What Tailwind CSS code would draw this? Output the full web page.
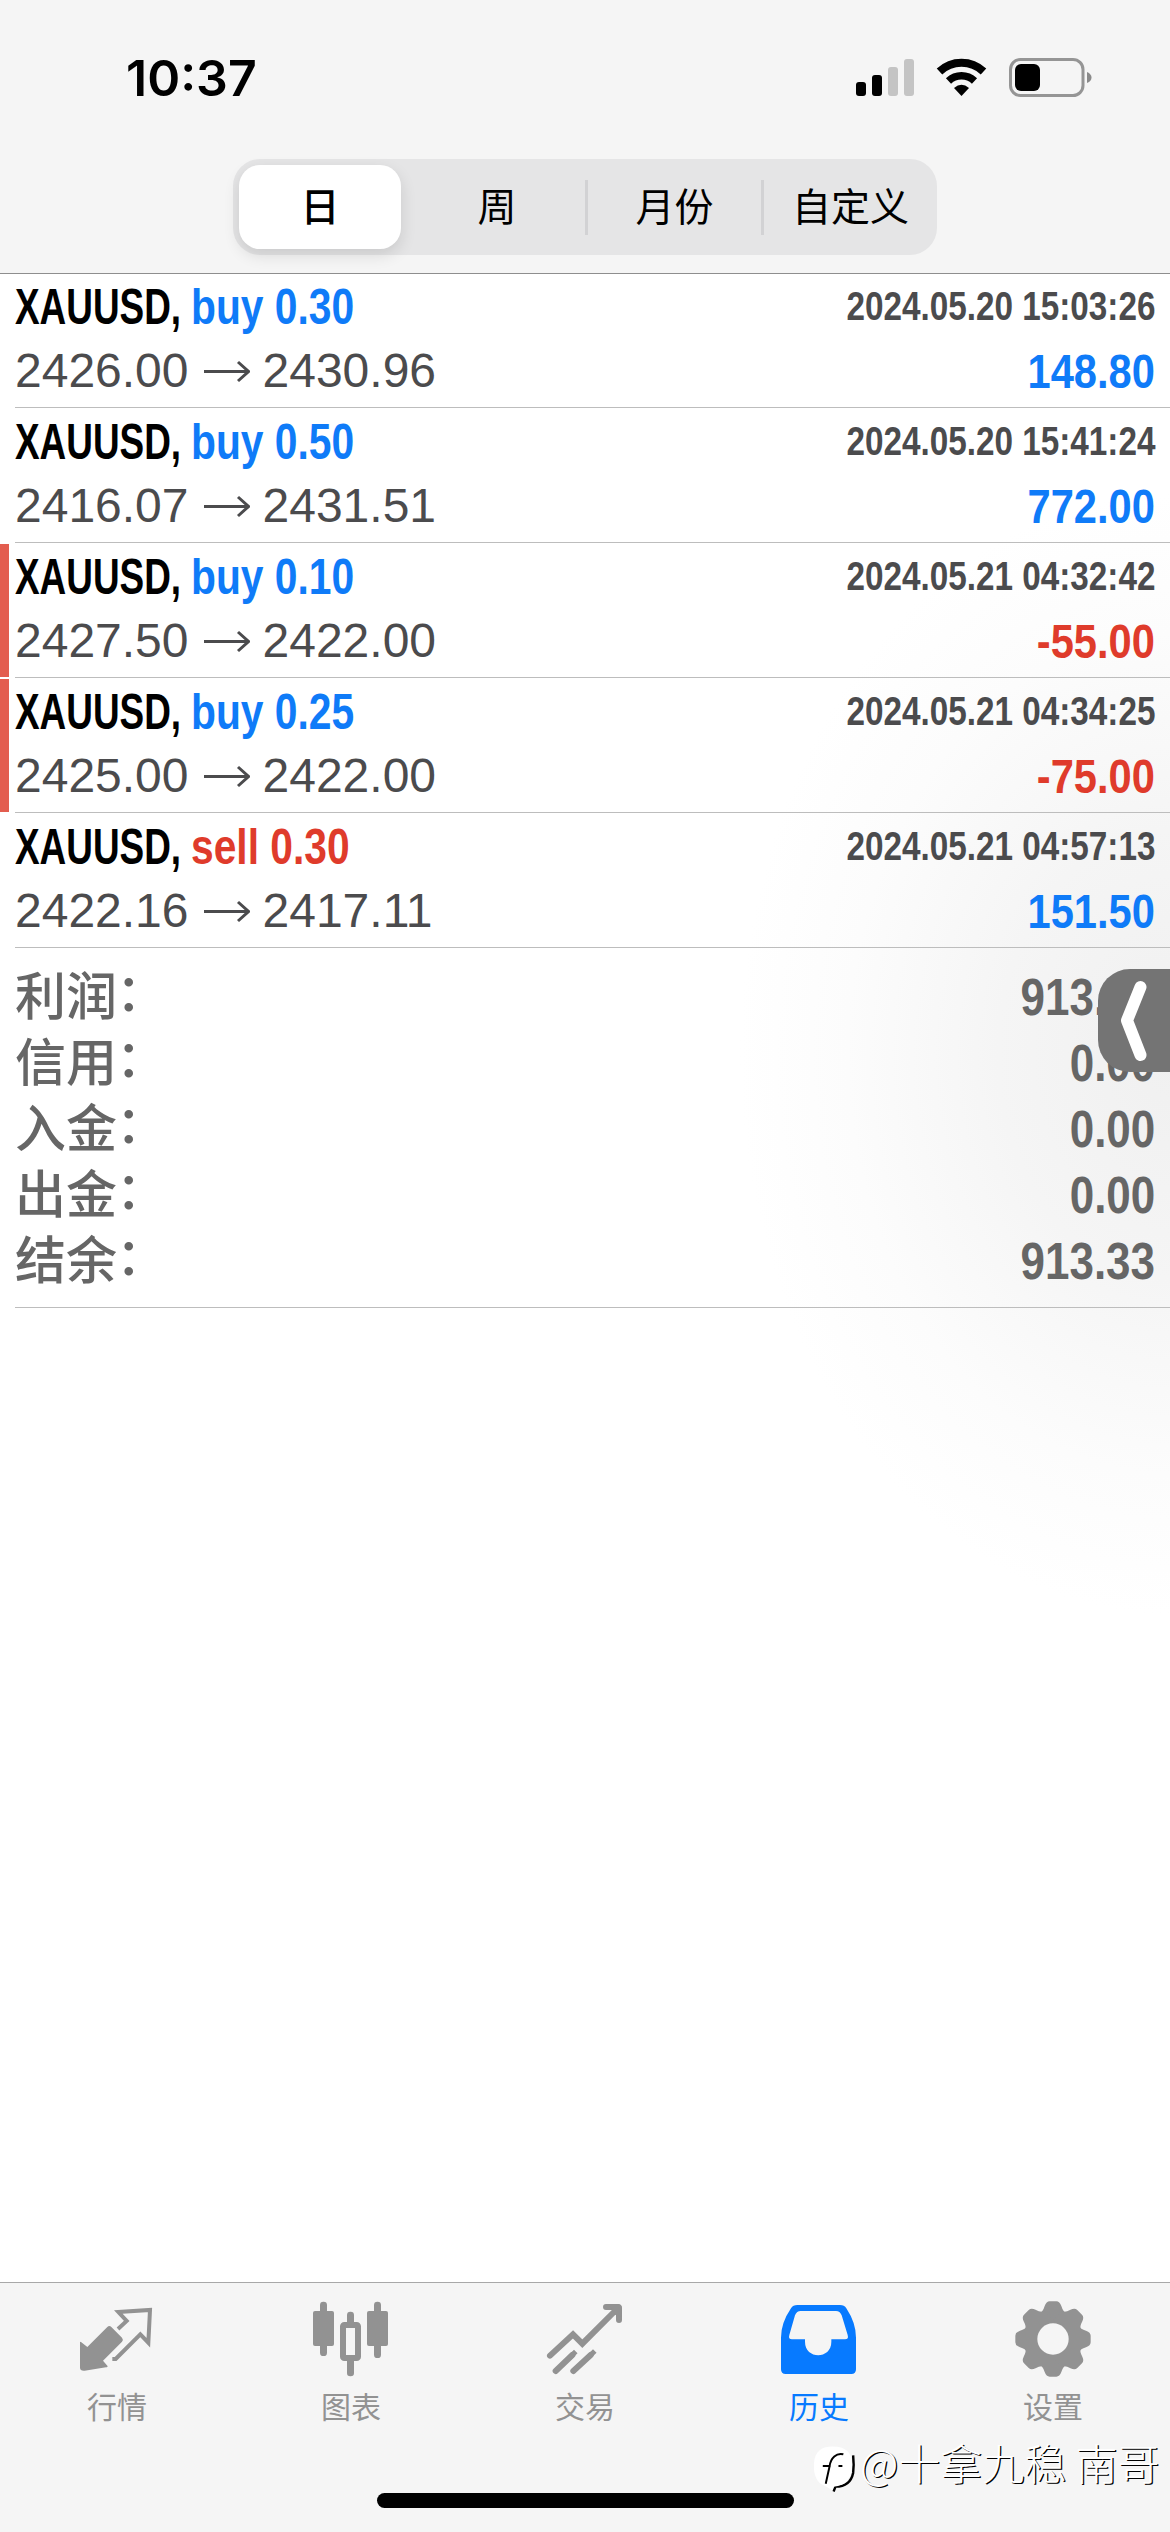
<!DOCTYPE html>
<html lang="zh-CN">
<head>
<meta charset="utf-8">
<title>历史</title>
<script src="https://cdn.jsdelivr.net/npm/@tailwindcss/browser@4"></script>
</head>
<body class="bg-white">
<div class="relative flex h-[2532px] w-[1170px] flex-col overflow-hidden bg-white font-['Liberation_Sans','Noto_Sans_CJK_SC',sans-serif]">
  <header class="flex h-[274px] flex-col border-b border-[#8e8e8e] bg-[#f5f5f5]">
    <div class="flex h-[159px] items-start justify-between pt-[48px] pr-[78px] pl-[126px]">
      <div class="font-['Inter',sans-serif] text-[50px] leading-[60px] font-semibold tracking-[0px] text-black">10:37</div>
      <svg class="mt-[8px] h-[44px] w-[238px]" viewBox="854 56 238 44" fill="none">
        <rect x="856" y="82" width="10" height="14" rx="3" fill="#000"/>
        <rect x="872" y="75" width="10" height="21" rx="3" fill="#000"/>
        <rect x="888" y="67" width="10" height="29" rx="3" fill="#c4c4c4"/>
        <rect x="904" y="59" width="10" height="37" rx="3" fill="#c4c4c4"/>
        <path d="M939.500 71.500a32 32 0 0 1 44 0" stroke="#000" stroke-width="8"/>
        <path d="M948.500 81a19 19 0 0 1 26 0" stroke="#000" stroke-width="7.500"/>
        <path d="M961.500 96l-7.500-8q7.500-6.500 15 0z" fill="#000"/>
        <rect x="1010.500" y="59.500" width="72.500" height="36" rx="10" stroke="#959595" stroke-width="3"/>
        <rect x="1015" y="64" width="25" height="27" rx="6" fill="#000"/>
        <path d="M1087 72q4.500 2 4.500 5.500t-4.500 5.500z" fill="#8a8a8a"/>
      </svg>
    </div>
    <div class="mx-auto grid h-[96px] w-[704px] grid-cols-4 items-center rounded-[27px] bg-[#e5e5e6] text-center text-[39px] leading-[54px] text-black">
      <div class="ml-[6px] flex h-[84px] w-[162px] items-center justify-center rounded-[21px] bg-white pt-[2px] font-medium shadow-[0_6px_16px_rgba(0,0,0,0.12)]">日</div>
      <div class="pt-[2px]">周</div>
      <div class="border-l-[3px] border-[#d2d2d4] pt-[1px]">月份</div>
      <div class="border-l-[3px] border-[#d2d2d4] pt-[1px]">自定义</div>
    </div>
  </header>

  <main class="flex flex-1 flex-col bg-[radial-gradient(ellipse_430px_560px_at_1170px_780px,#f0f0f0,#f5f5f5_40%,#fcfcfc_75%,#ffffff)]">
    <ul id="deals" class="-mt-px"></ul>
    <dl id="summary" class="ml-[15px] h-[360px] border-b border-[#bdbdbd] pt-[14px] font-bold text-[#666]"></dl>
  </main>

  <nav class="flex h-[250px] flex-col border-t border-[#a8a8a8] bg-[#f5f5f5] text-[#929292]">
    <div class="grid grid-cols-5 pt-[17px] text-[30px] leading-[44px]">
      <div class="flex flex-col items-center gap-[8px]">
        <svg class="size-[78px]" viewBox="234 90 234 234" fill="currentColor">
          <path d="M240 217q0-4 4 0l18 14 60-60q6-6 12 0l32 32q5 6 0 12l-57 57 13 15q3 4-4 5l-64 10q-14 1-14-9z"/>
          <path d="M354 177l26-24-25-27 95-6-5 98-24-25-74 74h-10" fill="none" stroke="currentColor" stroke-width="12"/>
        </svg>
        <span>行情</span>
      </div>
      <div class="flex flex-col items-center gap-[8px]">
        <svg class="size-[78px]" viewBox="936 90 234 234" fill="currentColor">
          <rect x="939" y="123" width="63" height="105" rx="6"/><rect x="960" y="95" width="21" height="163" rx="10"/>
          <rect x="1101" y="123" width="63" height="105" rx="6"/><rect x="1122" y="95" width="21" height="169" rx="10"/>
          <rect x="1041" y="125" width="21" height="40" rx="10"/><rect x="1041" y="262" width="21" height="57" rx="10"/>
          <rect x="1029" y="165" width="45" height="99" rx="4" fill="none" stroke="currentColor" stroke-width="18"/>
        </svg>
        <span>图表</span>
      </div>
      <div class="flex flex-col items-center gap-[8px]">
        <svg class="size-[78px]" viewBox="288 90 234 234" fill="none" stroke="currentColor" stroke-width="18" stroke-linecap="round">
          <path d="M300 257l69-64 28 28 101-101"/>
          <path d="M468 111h36M507 114v36"/>
          <path d="M476 103h30q9 0 9 9v30l-20-8z" fill="currentColor" stroke="none"/>
          <path d="M317 303l50-48M370 303l52-48"/>
          <path d="M363 259l9-9M420 257l9-9" stroke-linecap="square" stroke-width="15"/>
        </svg>
        <span>交易</span>
      </div>
      <div class="flex flex-col items-center gap-[8px] text-[#077aff]">
        <svg class="size-[78px]" viewBox="60 90 234 234" fill="currentColor" fill-rule="evenodd">
          <path d="M112 105h128q13 0 19 10 29 44 29 88v95q0 14-14 14H77q-14 0-14-14v-95q0-44 30-88 6-10 19-10z M122 123q-12 0-17 13L88 195q-4 13 8 13h39v7c0 54 79 54 79 0v-7h41q12 0 8-13l-18-59q-5-13-17-13z"/>
        </svg>
        <span>历史</span>
      </div>
      <div class="flex flex-col items-center gap-[8px]">
        <svg class="size-[78px]" viewBox="-117 -117 234 234">
          <g fill="currentColor">
            <circle r="86"/>
            <path id="tooth" d="M-40-78Q-30-82-25-99-20-113-10-113H10Q20-113 25-99 30-82 40-78V78Q30 82 25 99 20 113 10 113H-10Q-20 113-25 99-30 82-40 78z"/>
            <use href="#tooth" transform="rotate(45)"/><use href="#tooth" transform="rotate(90)"/><use href="#tooth" transform="rotate(135)"/>
          </g>
          <circle r="47" fill="#f5f5f5"/>
        </svg>
        <span>设置</span>
      </div>
    </div>
    <div class="mx-auto mt-[63px] h-[15px] w-[417px] rounded-full bg-black"></div>
  </nav>

  <!-- Edge handle floating over the summary -->
  <div class="absolute top-[969px] right-0 h-[103px] w-[72px] rounded-l-[32px] bg-[#747474]">
    <svg class="h-[103px] w-[72px]" viewBox="0 0 72 103" fill="none" stroke="#fff" stroke-width="12" stroke-linecap="round" stroke-linejoin="round"><path d="M42.500 18L29 51.500 42.500 86"/></svg>
  </div>

  <!-- Author watermark -->
  <div class="absolute top-[2437px] left-[813px] flex items-start">
    <svg class="mt-[7px] h-[50px] w-[47px]" viewBox="0 0 48 50" fill="none">
      <path d="M21 48l2-5q15 0 18-14 1-8 0-18" stroke="#000" stroke-width="2.500"/>
      <path d="M1 19Q2 2 20 2q20 0 20 18 0 22-19 23l-1 4-8-5Q0 38 1 19z" fill="#fff"/>
      <path d="M13 40l4-18c1-8 7-14 14-12M10 22h8M26 22h4" stroke="#000" stroke-width="2"/>
    </svg>
    <span class="font-['Noto_Sans_CJK_SC',sans-serif] text-[42px] leading-[50px] font-light whitespace-pre text-white [text-shadow:1.300px_1.300px_0.300px_#000]">@十拿九稳 南哥</span>
  </div>
</div>

<script>
const deals = [
  ['buy', '0.30', '2024.05.20 15:03:26', '2426.00', '2430.96', '148.80', false],
  ['buy', '0.50', '2024.05.20 15:41:24', '2416.07', '2431.51', '772.00', false],
  ['buy', '0.10', '2024.05.21 04:32:42', '2427.50', '2422.00', '-55.00', true],
  ['buy', '0.25', '2024.05.21 04:34:25', '2425.00', '2422.00', '-75.00', true],
  ['sell', '0.30', '2024.05.21 04:57:13', '2422.16', '2417.11', '151.50', false],
];
document.getElementById('deals').innerHTML = deals.map(([side, lots, time, open, close, profit, flagged]) => `
  <li class="flex h-[135px]">
    <div class="mt-[1px] h-[133px] w-[9px] ${flagged ? 'bg-[#e35d4f]' : ''}"></div>
    <div class="ml-[6px] flex flex-1 flex-col border-b border-[#bdbdbd] pt-[2px] pr-[15px] whitespace-nowrap">
      <div class="flex h-[64px] items-start font-bold">
        <span class="w-[176px] origin-left text-[50px] leading-[64px] text-black"><span class="inline-block origin-left scale-x-[0.738]">XAUUSD,</span></span>
        <span class="origin-left scale-x-[0.815] text-[50px] leading-[64px] ${side === 'buy' ? 'text-[#0f7bf8]' : 'text-[#df3b2b]'}">${side} ${lots}</span>
        <span class="ml-auto origin-right scale-x-[0.832] text-[40px] leading-[62px] text-[#4b4b4d]">${time}</span>
      </div>
      <div class="flex h-[64px] items-center text-[48px] leading-[64px] text-[#4b4b4d]">
        <span>${open}</span>
        <svg class="mr-[13px] ml-[13px] h-[24px] w-[48px]" viewBox="0 0 48 24" fill="none" stroke="currentColor" stroke-width="3"><path d="M2 12.500H46M36 3l10.500 9.500L36 22"/></svg>
        <span>${close}</span>
        <span class="ml-auto origin-right scale-x-[0.85] text-[49px] leading-[62px] font-bold ${profit[0] === '-' ? 'text-[#df3b2b]' : 'text-[#0f7bf8]'}">${profit}</span>
      </div>
    </div>
  </li>`).join('');

const summary = [['利润', '913.33'], ['信用', '0.00'], ['入金', '0.00'], ['出金', '0.00'], ['结余', '913.33']];
document.getElementById('summary').innerHTML = summary.map(([label, value]) => `
  <div class="flex h-[66px] items-start justify-between pr-[15px]">
    <dt class="-mt-[2px] flex font-['Noto_Sans_CJK_SC',sans-serif] text-[51px] leading-[66px] font-medium">${label}<span class="-mt-[4px] -ml-[1px]">：</span></dt>
    <dd class="origin-right scale-x-[0.862] pt-[3px] text-[51px] leading-[66px]">${value}</dd>
  </div>`).join('');
</script>
</body>
</html>
